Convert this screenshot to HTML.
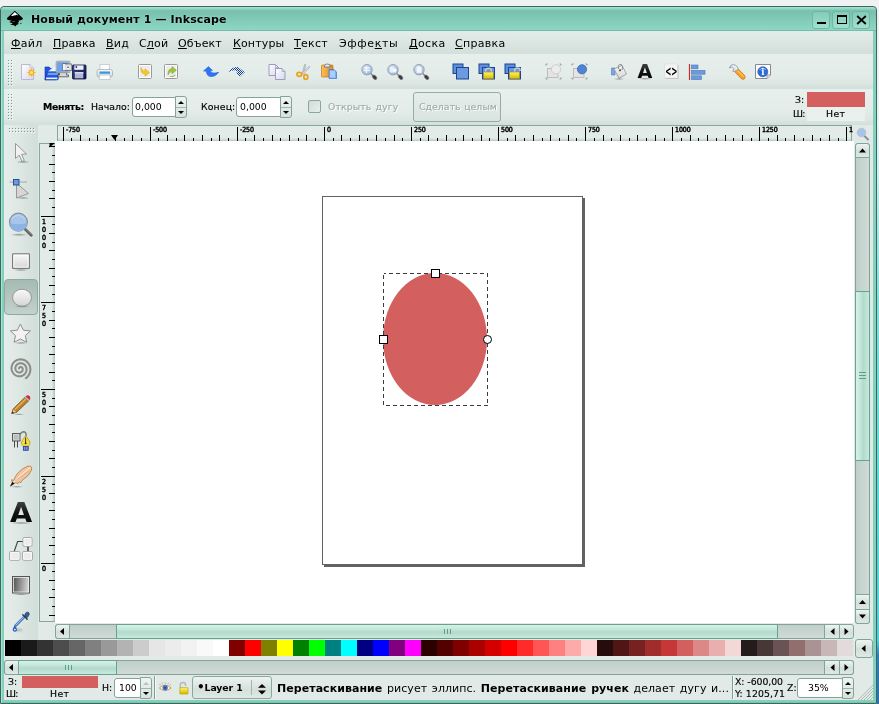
<!DOCTYPE html><html><head><meta charset="utf-8"><title>Inkscape</title><style>
html,body{margin:0;padding:0}
body{width:879px;height:704px;overflow:hidden;background:#eff1f2;position:relative;font-family:"DejaVu Sans","Liberation Sans",sans-serif;font-size:11px;color:#000}
div{position:absolute;box-sizing:border-box}
svg{position:absolute;overflow:visible}
span{position:absolute;white-space:nowrap;line-height:1;will-change:transform}
#win{left:0;top:6px;width:877px;height:698px;background:#84d0bd;border-radius:4px 4px 0 0;border:1px solid #3f665b;box-shadow:inset 1px 0 0 #a2e6d5,inset 0 -1px 0 #78c2af}
#title{left:1px;top:7px;width:875px;height:24px;background:linear-gradient(#a2e5d3 0,#9adfcc 4%,#7bc3b0 14%,#7ac2af 25%,#8bd7c4 94%,#74bba8 97%,#74bba8 100%);border-radius:4px 4px 0 0}
#content{left:4px;top:31px;width:869px;height:669px;background:#e1eae7}
#menubar{left:4px;top:31px;width:869px;height:23px;background:linear-gradient(#e3ece8,#d3dfda)}
#tb1{left:4px;top:54px;width:869px;height:35px;background:linear-gradient(#e7efec 0,#e3ece8 60%,#dde7e3 82%,#d2ded9 100%)}
#tb2{left:4px;top:89px;width:869px;height:36px;background:linear-gradient(#e8f0ed 0,#e3ece8 60%,#dde7e3 82%,#d3dfda 100%)}
.menu span{top:38px;font-size:11px}
.s9{font-size:9.33px;-webkit-text-stroke:0.15px currentColor}
u{text-decoration:underline;text-decoration-skip-ink:none;text-underline-offset:1px}
.hdl{background-image:radial-gradient(circle at 1px 1px,#fff 0.7px,transparent 1px),radial-gradient(circle at 0.5px 0.5px,#a9bab3 0.7px,transparent 1px);background-size:3px 3px}
.sbtn{border:1px solid #7fa597;border-radius:3px;background:linear-gradient(#eef4f1,#d3dfda 55%,#dfe8e4)}
.trough{border:1px solid #86a297;background:linear-gradient(#c0cfc9,#cfdbd6)}
.troughv{border:1px solid #86a297;background:linear-gradient(90deg,#c0cfc9,#cfdbd6)}
.slider{border:1px solid #62a68f;background:linear-gradient(#d9f0e8 0,#c4e6da 35%,#b0dbcb 55%,#c9e9dd 100%)}
.sliderv{border:1px solid #62a68f;background:linear-gradient(90deg,#d9f0e8 0,#c4e6da 35%,#b0dbcb 55%,#c9e9dd 100%)}
.entry{border:1px solid #86a397;border-radius:3px;background:#fff}
.dis{color:#9fada8;text-shadow:1px 1px 0 #fff}
</style></head><body>
<div id="win"></div><div id="title"></div><div id="content"></div>
<div style="left:877px;top:0;width:2px;height:704px;background:linear-gradient(#eff1f2 0,#eef0f2 80px,#e0f5f7 130px,#7fe0dc 300px,#55dcd8 500px,#4fd0d8 640px,#2f80b8 655px,#2a70b0 704px)"></div>
<span style="left:31px;top:14px;font-weight:bold;font-size:11px;letter-spacing:0.14px;text-shadow:0 0 2px rgba(190,245,230,0.7)">Новый документ 1 — Inkscape</span>
<svg style="left:0;top:0" width="40" height="40" viewBox="0 0 40 40"><path d="M14.800 10.800L22.700 18Q23.500 19.600 21.500 19.900L18.300 20.700L19.400 22L17.500 22.700L18.900 23.900L16.800 24.800L15.300 26.600L14 25.300L10.200 24.700L12.800 23.600L9.200 22L11.800 20.800L8.200 19.900Q6.300 19.600 7.100 18Z" fill="#000"/><path d="M14.800 12.100L18.300 15.200Q17 15.500 16.300 14.800Q15.300 15.800 14.300 15.200Q13 16.300 11.100 15.700Z" fill="#fff"/><path d="M12.400 21.500H14.800" stroke="#888" stroke-width="0.6"/><circle cx="20.900" cy="23.300" r="0.600" fill="#111"/></svg>
<div style="left:812px;top:10.5px;width:18px;height:18px;border:1px solid #6fb7a4;border-radius:3px;background:linear-gradient(#84cbb8,#a0e0ce)"></div>
<div style="left:832px;top:10.5px;width:18px;height:18px;border:1px solid #6fb7a4;border-radius:3px;background:linear-gradient(#84cbb8,#a0e0ce)"></div>
<div style="left:852px;top:10.5px;width:18px;height:18px;border:1px solid #6fb7a4;border-radius:3px;background:linear-gradient(#84cbb8,#a0e0ce)"></div>
<div style="left:817px;top:21.5px;width:9px;height:2.5px;background:#000"></div>
<div style="left:837px;top:15px;width:10px;height:9px;border:1px solid #000;border-top:2px solid #000"></div>
<svg style="left:856px;top:14.500px" width="11" height="10" viewBox="0 0 11 10"><path d="M1.2 1 L9.8 9 M9.8 1 L1.2 9" stroke="#000" stroke-width="1.8" fill="none"/></svg>
<div id="menubar"></div><div id="tb1"></div><div id="tb2"></div>
<div class="menu" style="left:0;top:0">
<span style="left:11px;letter-spacing:0.3px"><u>Ф</u>айл</span>
<span style="left:53px;letter-spacing:0.1px"><u>П</u>равка</span>
<span style="left:106px;letter-spacing:0.25px"><u>В</u>ид</span>
<span style="left:139px;letter-spacing:0.15px">С<u>л</u>ой</span>
<span style="left:178px;letter-spacing:0.14px"><u>О</u>бъект</span>
<span style="left:233px;letter-spacing:0.16px"><u>К</u>онтуры</span>
<span style="left:294px;letter-spacing:0.28px"><u>Т</u>екст</span>
<span style="left:338.5px;letter-spacing:0.6px">Эффе<u>к</u>ты</span>
<span style="left:408.5px;letter-spacing:0.39px"><u>Д</u>оска</span>
<span style="left:455px;letter-spacing:0.29px"><u>С</u>правка</span>
</div>
<!--TB1-->

<span class="s9" style="left:43px;top:102px;font-weight:bold;letter-spacing:-0.3px">Менять:</span>
<span class="s9" style="left:91px;top:102px">Начало:</span>
<span class="s9" style="left:201px;top:102px;letter-spacing:0.12px">Конец:</span>
<div class="entry" style="left:132px;top:97px;width:45px;height:20px"></div>
<div style="left:175px;top:96px;width:12px;height:22px;border:1px solid #86a397;border-radius:0 3px 3px 0;background:linear-gradient(#eef4f1,#d7e2dd)"></div>
<div style="left:176px;top:107px;width:10px;height:1px;background:#9db8ad"></div>
<svg style="left:178.0px;top:101px" width="6" height="3" viewBox="0 0 6 3"><path d="M0 3 L3 0 L6 3Z" fill="#000"/></svg>
<svg style="left:178.0px;top:111px" width="6" height="3" viewBox="0 0 6 3"><path d="M0 0 L3 3 L6 0Z" fill="#000"/></svg>
<span style="left:135px;top:102px;font-size:9.33px">0,000</span>
<div class="entry" style="left:236px;top:97px;width:46px;height:20px"></div>
<div style="left:280px;top:96px;width:12px;height:22px;border:1px solid #86a397;border-radius:0 3px 3px 0;background:linear-gradient(#eef4f1,#d7e2dd)"></div>
<div style="left:281px;top:107px;width:10px;height:1px;background:#9db8ad"></div>
<svg style="left:283.0px;top:101px" width="6" height="3" viewBox="0 0 6 3"><path d="M0 3 L3 0 L6 3Z" fill="#000"/></svg>
<svg style="left:283.0px;top:111px" width="6" height="3" viewBox="0 0 6 3"><path d="M0 0 L3 3 L6 0Z" fill="#000"/></svg>
<span style="left:240px;top:102px;font-size:9.33px">0,000</span>
<div style="left:308px;top:100px;width:13px;height:13px;border:1px solid #8aa79d;border-radius:2px;background:linear-gradient(135deg,#d0dcd7,#e8efec)"></div>
<span class="s9 dis" style="left:327.5px;top:102px;letter-spacing:0.12px;word-spacing:1px">Открыть дугу</span>
<div style="left:413px;top:92px;width:88px;height:30px;border:1px solid #93ada3;border-radius:3px;background:linear-gradient(#e6eeeb,#d9e3df)"></div>
<span class="s9 dis" style="left:418.500px;top:102px;letter-spacing:0.05px;word-spacing:0.5px">Сделать целым</span>
<span class="s9" style="left:795px;top:95px">З:</span>
<div style="left:807px;top:92px;width:58px;height:15px;background:#d35f5f"></div>
<span class="s9" style="left:792.500px;top:109px;letter-spacing:-0.7px">Ш:</span>
<div style="left:807px;top:107px;width:58px;height:14px;background:#e9f0ed"></div>
<span class="s9" style="left:826px;top:109px;letter-spacing:0.4px">Нет</span>
<!--TOOLBOX-->
<div style="left:4px;top:125px;width:34px;height:515px;background:linear-gradient(90deg,#e6eeeb,#d2ded9)"></div>
<div style="left:4px;top:279px;width:34px;height:36px;border:1px solid #8eaaa0;border-radius:4px;background:linear-gradient(#a6bab2,#c2d2cc)"></div>
<!--CANVAS-->
<div style="left:57px;top:125px;width:795px;height:16px;background:#e3ebe8;border:1px solid #86a79b;border-bottom:none"></div>
<div style="left:39px;top:143px;width:16px;height:479px;background:#e3ebe8;border:1px solid #86a79b;border-right:none"></div>
<div style="left:52px;top:144px;width:3px;height:477px;background:linear-gradient(90deg,rgba(120,160,145,0),rgba(120,160,145,0.55))"></div>
<div style="left:58px;top:138px;width:793px;height:3px;background:linear-gradient(rgba(120,160,145,0),rgba(120,160,145,0.45))"></div>
<div style="left:55px;top:141px;width:799px;height:482px;background:#fff"></div>
<svg style="left:0;top:0" width="879" height="704"><path d="M63.5 127V141 M71.5 138V141 M80.5 135V141 M89.5 138V141 M97.5 135V141 M106.5 138V141 M115.5 135V141 M124.5 138V141 M132.5 135V141 M141.5 138V141 M150.5 127V141 M158.5 138V141 M167.5 135V141 M176.5 138V141 M184.5 135V141 M193.5 138V141 M202.5 135V141 M211.5 138V141 M219.5 135V141 M228.5 138V141 M237.5 127V141 M245.5 138V141 M254.5 135V141 M263.5 138V141 M272.5 135V141 M280.5 138V141 M289.5 135V141 M298.5 138V141 M306.5 135V141 M315.5 138V141 M324.5 127V141 M333.5 138V141 M341.5 135V141 M350.5 138V141 M359.5 135V141 M367.5 138V141 M376.5 135V141 M385.5 138V141 M394.5 135V141 M402.5 138V141 M411.5 127V141 M420.5 138V141 M428.5 135V141 M437.5 138V141 M446.5 135V141 M455.5 138V141 M463.5 135V141 M472.5 138V141 M481.5 135V141 M489.5 138V141 M498.5 127V141 M507.5 138V141 M515.5 135V141 M524.5 138V141 M533.5 135V141 M542.5 138V141 M550.5 135V141 M559.5 138V141 M568.5 135V141 M576.5 138V141 M585.5 127V141 M594.5 138V141 M603.5 135V141 M611.5 138V141 M620.5 135V141 M629.5 138V141 M637.5 135V141 M646.5 138V141 M655.5 135V141 M664.5 138V141 M672.5 127V141 M681.5 138V141 M690.5 135V141 M698.5 138V141 M707.5 135V141 M716.5 138V141 M725.5 135V141 M733.5 138V141 M742.5 135V141 M751.5 138V141 M759.5 127V141 M768.5 138V141 M777.5 135V141 M785.5 138V141 M794.5 135V141 M803.5 138V141 M812.5 135V141 M820.5 138V141 M829.5 135V141 M838.5 138V141 M846.5 127V141" stroke="#000" stroke-width="1" fill="none" shape-rendering="crispEdges"/>
<path d="M49 615.5H55 M52 606.5H55 M49 597.5H55 M52 589.5H55 M49 580.5H55 M52 571.5H55 M41 563.5H55 M52 554.5H55 M49 545.5H55 M52 537.5H55 M49 528.5H55 M52 519.5H55 M49 510.5H55 M52 502.5H55 M49 493.5H55 M52 484.5H55 M41 476.5H55 M52 467.5H55 M49 458.5H55 M52 450.5H55 M49 441.5H55 M52 432.5H55 M49 424.5H55 M52 415.5H55 M49 406.5H55 M52 398.5H55 M41 389.5H55 M52 380.5H55 M49 372.5H55 M52 363.5H55 M49 354.5H55 M52 346.5H55 M49 337.5H55 M52 328.5H55 M49 320.5H55 M52 311.5H55 M41 302.5H55 M52 294.5H55 M49 285.5H55 M52 276.5H55 M49 268.5H55 M52 259.5H55 M49 250.5H55 M52 242.5H55 M49 233.5H55 M52 224.5H55 M41 216.5H55 M52 207.5H55 M49 198.5H55 M52 190.5H55 M49 181.5H55 M52 172.5H55 M49 164.5H55 M52 155.5H55 M49 146.5H55" stroke="#000" stroke-width="1" fill="none" shape-rendering="crispEdges"/>
<path d="M111 135h7l-3.5 5z" fill="#000"/><path d="M49.500 143h5.500L49.500 147.500z" fill="#000"/>
</svg>
<span style="left:66px;top:127px;font-size:7px;font-stretch:condensed;letter-spacing:-0.1px;-webkit-text-stroke:0.45px #000">-750</span>
<span style="left:153px;top:127px;font-size:7px;font-stretch:condensed;letter-spacing:-0.1px;-webkit-text-stroke:0.45px #000">-500</span>
<span style="left:240px;top:127px;font-size:7px;font-stretch:condensed;letter-spacing:-0.1px;-webkit-text-stroke:0.45px #000">-250</span>
<span style="left:327px;top:127px;font-size:7px;font-stretch:condensed;letter-spacing:-0.1px;-webkit-text-stroke:0.45px #000">0</span>
<span style="left:414px;top:127px;font-size:7px;font-stretch:condensed;letter-spacing:-0.1px;-webkit-text-stroke:0.45px #000">250</span>
<span style="left:501px;top:127px;font-size:7px;font-stretch:condensed;letter-spacing:-0.1px;-webkit-text-stroke:0.45px #000">500</span>
<span style="left:588px;top:127px;font-size:7px;font-stretch:condensed;letter-spacing:-0.1px;-webkit-text-stroke:0.45px #000">750</span>
<span style="left:675px;top:127px;font-size:7px;font-stretch:condensed;letter-spacing:-0.1px;-webkit-text-stroke:0.45px #000">1000</span>
<span style="left:762px;top:127px;font-size:7px;font-stretch:condensed;letter-spacing:-0.1px;-webkit-text-stroke:0.45px #000">1250</span>
<span style="left:849px;top:127px;font-size:7px;font-stretch:condensed;letter-spacing:-0.1px;-webkit-text-stroke:0.45px #000">1</span>
<span style="left:42px;top:219px;font-size:7px;font-stretch:condensed;-webkit-text-stroke:0.45px #000">1</span>
<span style="left:42px;top:227px;font-size:7px;font-stretch:condensed;-webkit-text-stroke:0.45px #000">0</span>
<span style="left:42px;top:235px;font-size:7px;font-stretch:condensed;-webkit-text-stroke:0.45px #000">0</span>
<span style="left:42px;top:243px;font-size:7px;font-stretch:condensed;-webkit-text-stroke:0.45px #000">0</span>
<span style="left:42px;top:305px;font-size:7px;font-stretch:condensed;-webkit-text-stroke:0.45px #000">7</span>
<span style="left:42px;top:313px;font-size:7px;font-stretch:condensed;-webkit-text-stroke:0.45px #000">5</span>
<span style="left:42px;top:321px;font-size:7px;font-stretch:condensed;-webkit-text-stroke:0.45px #000">0</span>
<span style="left:42px;top:392px;font-size:7px;font-stretch:condensed;-webkit-text-stroke:0.45px #000">5</span>
<span style="left:42px;top:400px;font-size:7px;font-stretch:condensed;-webkit-text-stroke:0.45px #000">0</span>
<span style="left:42px;top:408px;font-size:7px;font-stretch:condensed;-webkit-text-stroke:0.45px #000">0</span>
<span style="left:42px;top:479px;font-size:7px;font-stretch:condensed;-webkit-text-stroke:0.45px #000">2</span>
<span style="left:42px;top:487px;font-size:7px;font-stretch:condensed;-webkit-text-stroke:0.45px #000">5</span>
<span style="left:42px;top:495px;font-size:7px;font-stretch:condensed;-webkit-text-stroke:0.45px #000">0</span>
<span style="left:42px;top:566px;font-size:7px;font-stretch:condensed;-webkit-text-stroke:0.45px #000">0</span>
<div style="left:324px;top:198px;width:261px;height:369px;background:#626262"></div>
<div style="left:322px;top:196px;width:261px;height:369px;background:#fff;border:1px solid #626262"></div>
<svg style="left:0;top:0" width="879" height="704"><ellipse cx="435" cy="339" rx="52" ry="66" fill="#d35f5f"/><rect x="383.5" y="273.5" width="104" height="132" fill="none" stroke="#3c3c3c" stroke-width="1" stroke-dasharray="4 3" stroke-dashoffset="2" shape-rendering="crispEdges"/><rect x="431.500" y="269.500" width="8" height="8" fill="#fff" stroke="#000"/><rect x="379.500" y="335.500" width="8" height="8" fill="#fff" stroke="#000"/><circle cx="487.500" cy="339.500" r="4" fill="#fff" stroke="#000"/></svg>
<!--SCROLL-->
<div class="trough" style="left:55px;top:624px;width:798px;height:15px;border-radius:3px"></div>
<div class="slider" style="left:116px;top:624px;width:662px;height:15px"></div>
<div class="sbtn" style="left:55px;top:624px;width:15px;height:15px;border-radius:3px 0 0 3px"></div>
<svg style="left:0;top:0" width="879" height="704"><path d="M64 628.0L60 631.5L64 635.0Z" fill="#000"/></svg>
<div class="sbtn" style="left:824px;top:624px;width:16px;height:15px;border-radius:0"></div>
<svg style="left:0;top:0" width="879" height="704"><path d="M834.5 628.0L830.5 631.5L834.5 635.0Z" fill="#000"/></svg>
<div class="sbtn" style="left:839px;top:624px;width:15px;height:15px;border-radius:0 3px 3px 0"></div>
<svg style="left:0;top:0" width="879" height="704"><path d="M844.5 628.0L848.5 631.5L844.5 635.0Z" fill="#000"/></svg>
<svg style="left:444px;top:629px" width="8" height="5"><path d="M0.5 0V5M3.5 0V5M6.5 0V5" stroke="#5f9f8a" stroke-width="1"/></svg>
<div class="troughv" style="left:855px;top:143px;width:15px;height:481px;border-radius:3px"></div>
<div class="sliderv" style="left:855px;top:291px;width:15px;height:170px"></div>
<div class="sbtn" style="left:855px;top:143px;width:15px;height:15px;border-radius:3px 3px 0 0"></div>
<svg style="left:0;top:0" width="879" height="704"><path d="M859.0 152.5L862.5 148.5L866.0 152.5Z" fill="#000"/></svg>
<div class="sbtn" style="left:855px;top:594px;width:15px;height:16px;border-radius:0"></div>
<svg style="left:0;top:0" width="879" height="704"><path d="M859.0 604L862.5 600L866.0 604Z" fill="#000"/></svg>
<div class="sbtn" style="left:855px;top:609px;width:15px;height:15px;border-radius:0 0 3px 3px"></div>
<svg style="left:0;top:0" width="879" height="704"><path d="M859.0 614.5L862.5 618.5L866.0 614.5Z" fill="#000"/></svg>
<svg style="left:859px;top:372px" width="7" height="8"><path d="M0 0.5H7M0 3.5H7M0 6.5H7" stroke="#5f9f8a" stroke-width="1"/></svg>
<div style="left:5px;top:640px;width:848px;height:16px;background:linear-gradient(90deg,#000000 0px,#000000 16px,#1a1a1a 16px,#1a1a1a 32px,#333333 32px,#333333 48px,#4d4d4d 48px,#4d4d4d 64px,#666666 64px,#666666 80px,#808080 80px,#808080 96px,#999999 96px,#999999 112px,#b3b3b3 112px,#b3b3b3 128px,#cccccc 128px,#cccccc 144px,#e6e6e6 144px,#e6e6e6 160px,#ececec 160px,#ececec 176px,#f2f2f2 176px,#f2f2f2 192px,#f9f9f9 192px,#f9f9f9 208px,#ffffff 208px,#ffffff 224px,#800000 224px,#800000 240px,#ff0000 240px,#ff0000 256px,#808000 256px,#808000 272px,#ffff00 272px,#ffff00 288px,#008000 288px,#008000 304px,#00ff00 304px,#00ff00 320px,#008080 320px,#008080 336px,#00ffff 336px,#00ffff 352px,#000080 352px,#000080 368px,#0000ff 368px,#0000ff 384px,#800080 384px,#800080 400px,#ff00ff 400px,#ff00ff 416px,#2b0000 416px,#2b0000 432px,#550000 432px,#550000 448px,#800000 448px,#800000 464px,#aa0000 464px,#aa0000 480px,#d40000 480px,#d40000 496px,#ff0000 496px,#ff0000 512px,#ff2a2a 512px,#ff2a2a 528px,#ff5555 528px,#ff5555 544px,#ff8080 544px,#ff8080 560px,#ffaaaa 560px,#ffaaaa 576px,#ffd5d5 576px,#ffd5d5 592px,#280b0b 592px,#280b0b 608px,#501616 608px,#501616 624px,#782121 624px,#782121 640px,#a02c2c 640px,#a02c2c 656px,#c83737 656px,#c83737 672px,#d35f5f 672px,#d35f5f 688px,#de8787 688px,#de8787 704px,#e9afaf 704px,#e9afaf 720px,#f4d7d7 720px,#f4d7d7 736px,#241c1c 736px,#241c1c 752px,#483737 752px,#483737 768px,#6c5353 768px,#6c5353 784px,#916f6f 784px,#916f6f 800px,#ac9393 800px,#ac9393 816px,#c8b7b7 816px,#c8b7b7 832px,#e3dbdb 832px,#e3dbdb 848px)"></div>
<div class="sbtn" style="left:855px;top:639px;width:18px;height:19px"></div>
<svg style="left:0;top:0" width="879" height="704"><path d="M865.5 645.0L861.5 648.5L865.5 652.0Z" fill="#000"/></svg>
<div class="trough" style="left:4px;top:660px;width:850px;height:15px;border-radius:3px"></div>
<div class="slider" style="left:18px;top:660px;width:99px;height:15px"></div>
<div class="sbtn" style="left:4px;top:660px;width:15px;height:15px;border-radius:3px 0 0 3px"></div>
<svg style="left:0;top:0" width="879" height="704"><path d="M13 664.0L9 667.5L13 671.0Z" fill="#000"/></svg>
<div class="sbtn" style="left:824px;top:660px;width:16px;height:15px;border-radius:0"></div>
<svg style="left:0;top:0" width="879" height="704"><path d="M834.5 664.0L830.5 667.5L834.5 671.0Z" fill="#000"/></svg>
<div class="sbtn" style="left:839px;top:660px;width:15px;height:15px;border-radius:0 3px 3px 0"></div>
<svg style="left:0;top:0" width="879" height="704"><path d="M844.5 664.0L848.5 667.5L844.5 671.0Z" fill="#000"/></svg>
<svg style="left:65px;top:665px" width="8" height="5"><path d="M0.5 0V5M3.5 0V5M6.5 0V5" stroke="#5f9f8a" stroke-width="1"/></svg>
<!--STATUS-->
<span class="s9" style="left:8px;top:677px">З:</span>
<div style="left:22px;top:676px;width:76px;height:12px;background:#d35f5f"></div>
<span class="s9" style="left:5.800px;top:689px;letter-spacing:-0.7px">Ш:</span>
<span class="s9" style="left:50px;top:689px;letter-spacing:0.4px">Нет</span>
<span class="s9" style="left:102px;top:683px">Н:</span>
<div class="entry" style="left:114px;top:678px;width:28px;height:20px"></div>
<div style="left:140px;top:677px;width:12px;height:22px;border:1px solid #86a397;border-radius:0 3px 3px 0;background:linear-gradient(#eef4f1,#d7e2dd)"></div>
<div style="left:141px;top:688px;width:10px;height:1px;background:#9db8ad"></div>
<svg style="left:143.0px;top:682px" width="6" height="3" viewBox="0 0 6 3"><path d="M0 3 L3 0 L6 3Z" fill="#b5c2bd"/></svg>
<svg style="left:143.0px;top:692px" width="6" height="3" viewBox="0 0 6 3"><path d="M0 0 L3 3 L6 0Z" fill="#000"/></svg>
<span style="left:119px;top:683px;font-size:9.33px">100</span>
<div style="left:154px;top:676px;width:1px;height:23px;background:#7f9f93"></div><div style="left:155px;top:676px;width:1px;height:23px;background:#f4f8f6"></div>
<div style="left:192px;top:676px;width:80px;height:23px;border:1px solid #8aa99e;border-radius:3px;background:linear-gradient(#edf3f0,#d5e0db 60%,#dfe8e4)"></div>
<span style="left:197px;top:683px;font-size:9.33px;font-weight:bold;letter-spacing:-0.1px"><span style="position:static;font-size:12px;line-height:0">•</span>Layer 1</span>
<div style="left:251px;top:680px;width:1px;height:15px;background:#9db8ad"></div>
<svg style="left:257.5px;top:683.5px" width="8" height="11" viewBox="0 0 8 11"><path d="M0 3.8L4 0L8 3.800ZM0 6.4L4 10.4L8 6.400Z" fill="#000"/></svg>
<span style="left:277px;top:683px;font-size:11px;letter-spacing:0.05px;word-spacing:1.1px"><b>Перетаскивание</b> рисует эллипс. <b>Перетаскивание ручек</b> делает дугу и...</span>
<div style="left:732px;top:676px;width:1px;height:23px;background:#7f9f93"></div><div style="left:733px;top:676px;width:1px;height:23px;background:#f4f8f6"></div>
<span class="s9" style="left:735px;top:677px;letter-spacing:-0.05px">X: -600,00</span>
<span class="s9" style="left:735px;top:689px;letter-spacing:0.1px">Y: 1205,71</span>
<span class="s9" style="left:787px;top:683px">Z:</span>
<div class="entry" style="left:797px;top:678px;width:47px;height:20px"></div>
<div style="left:842px;top:677px;width:12px;height:22px;border:1px solid #86a397;border-radius:0 3px 3px 0;background:linear-gradient(#eef4f1,#d7e2dd)"></div>
<div style="left:843px;top:688px;width:10px;height:1px;background:#9db8ad"></div>
<svg style="left:845.0px;top:682px" width="6" height="3" viewBox="0 0 6 3"><path d="M0 3 L3 0 L6 3Z" fill="#000"/></svg>
<svg style="left:845.0px;top:692px" width="6" height="3" viewBox="0 0 6 3"><path d="M0 0 L3 3 L6 0Z" fill="#000"/></svg>
<span style="left:807.5px;top:683px;font-size:9.33px">35%</span>
<svg style="left:857px;top:684px" width="16" height="16"><path d="M1 16L16 1M4 16L16 4M7 16L16 7M10 16L16 10M13 16L16 13" stroke="#a9bcb4" stroke-width="1"/></svg>
<svg style="left:0;top:0" width="879" height="704" viewBox="0 0 879 704">
<defs><linearGradient id="gpage" x1="0" y1="0" x2="1" y2="1"><stop offset="0" stop-color="#fff"/><stop offset="1" stop-color="#d6d6ee"/></linearGradient><linearGradient id="gblue" x1="0" y1="0" x2="0" y2="1"><stop offset="0" stop-color="#3f7cf0"/><stop offset="1" stop-color="#0f35b8"/></linearGradient><linearGradient id="gnavy" x1="0" y1="0" x2="1" y2="1"><stop offset="0" stop-color="#3b4a8c"/><stop offset="1" stop-color="#0c1446"/></linearGradient><linearGradient id="ggray" x1="0" y1="0" x2="0" y2="1"><stop offset="0" stop-color="#fafafa"/><stop offset="1" stop-color="#d4d4d4"/></linearGradient><linearGradient id="gor" x1="0" y1="0" x2="1" y2="0"><stop offset="0" stop-color="#f8c060"/><stop offset="1" stop-color="#e08a18"/></linearGradient><radialGradient id="glens" cx="0.4" cy="0.35" r="0.7"><stop offset="0" stop-color="#dce9fa"/><stop offset="1" stop-color="#8fb4e6"/></radialGradient><linearGradient id="gyel" x1="0" y1="0" x2="0" y2="1"><stop offset="0" stop-color="#fff46a"/><stop offset="1" stop-color="#d8b800"/></linearGradient><linearGradient id="gA" x1="0" y1="0" x2="0" y2="1"><stop offset="0" stop-color="#555"/><stop offset="0.5" stop-color="#111"/><stop offset="1" stop-color="#000"/></linearGradient><linearGradient id="ggrad" x1="0" y1="0" x2="1" y2="0.100"><stop offset="0" stop-color="#4a4a4a"/><stop offset="1" stop-color="#d8d8d8"/></linearGradient><radialGradient id="gshadow" cx="0.5" cy="0.5" r="0.5"><stop offset="0" stop-color="#000" stop-opacity="0.35"/><stop offset="1" stop-color="#000" stop-opacity="0"/></radialGradient><pattern id="pchk" x="0" y="0" width="2" height="2" patternUnits="userSpaceOnUse"><rect x="0" y="0" width="1" height="1" fill="#1c3c9c"/><rect x="1" y="1" width="1" height="1" fill="#1c3c9c"/></pattern><pattern id="pdots" x="8" y="60" width="3" height="3" patternUnits="userSpaceOnUse"><rect x="0" y="0" width="1" height="1" fill="#7f9a90"/><rect x="1" y="1" width="1" height="1" fill="#fff"/></pattern><pattern id="pdots2" x="8" y="94" width="3" height="3" patternUnits="userSpaceOnUse"><rect x="0" y="0" width="1" height="1" fill="#7f9a90"/><rect x="1" y="1" width="1" height="1" fill="#fff"/></pattern><pattern id="pdots3" x="9" y="128" width="3" height="3" patternUnits="userSpaceOnUse"><rect x="0" y="0" width="1" height="1" fill="#7f9a90"/><rect x="1" y="1" width="1" height="1" fill="#fff"/></pattern></defs>
<rect x="8" y="60" width="6" height="27" fill="url(#pdots)"/><rect x="8" y="94" width="6" height="27" fill="url(#pdots2)"/><rect x="9" y="128" width="27" height="6" fill="url(#pdots3)"/>
<path d="M21.5 64.5H30l3.5 3.5V79.5H21.5Z" fill="url(#gpage)" stroke="#b9b9cf" stroke-width="1"/>
<path d="M30 64.5V68H33.5" fill="#e8e8f4" stroke="#b9b9cf" stroke-width="0.8"/>
<path d="M31.5 68l1 2.2 2.2-.9-.9 2.2 2.2 1-2.2 1 .9 2.2-2.2-.9-1 2.2-1-2.2-2.2.9.9-2.2-2.2-1 2.2-1-.9-2.2 2.2.9Z" fill="#f6b21c"/><circle cx="31.5" cy="72.5" r="1.6" fill="#ffe27a"/>
<path d="M45 79.8V67H49.2L50.5 68.5H56V79.800Z" fill="#1f55dd" stroke="#0b2fb0" stroke-width="0.600"/>
<path d="M48.2 71.500L56.200 64.800V71.500Z" fill="#eef3ff" stroke="#b8c8ee" stroke-width="0.400"/>
<path d="M47.300 72H59.300L58 79.800H45Z" fill="url(#gblue)" stroke="#0b2fb0" stroke-width="0.600"/>
<path d="M48 73.200H58L57.700 74.800H47.500Z" fill="#8fc4ff" opacity="0.800"/><path d="M46.200 77.500H57.600L57.300 79.200H45.800Z" fill="#f2f6ff" opacity="0.950"/>
<path d="M59.500 72.500H66.600V75H68.500V76.800H58V75H59.500Z" fill="#d6d8dc" stroke="#3a3a3a" stroke-width="0.700"/>
<rect x="56.200" y="61.200" width="13.800" height="11.500" rx="1" fill="#cfc8bc" stroke="#8e8a84" stroke-width="0.700"/><rect x="57.400" y="62.500" width="11" height="9" fill="#4f8fe6"/><rect x="57.400" y="62.500" width="4.500" height="9" fill="#6aa4f0"/>
<rect x="62.800" y="64" width="9" height="6.300" fill="#dcdde4" stroke="#3a3a4a" stroke-width="0.500"/><rect x="62.800" y="64" width="2.200" height="6.300" fill="#f4f0e8"/><circle cx="68" cy="67.200" r="1.500" fill="#fff"/><circle cx="68" cy="67.200" r="0.800" fill="#22224a"/>
<rect x="72.5" y="65" width="13.5" height="14" rx="0.8" fill="url(#gnavy)" stroke="#0a1040" stroke-width="0.8"/>
<rect x="74.300" y="65.400" width="9.200" height="4.400" fill="#eef0f8"/><circle cx="76.300" cy="67" r="0.900" fill="#27337a"/>
<rect x="74.800" y="72" width="8.500" height="6.300" fill="#b4b6d6"/><rect x="74.800" y="72" width="8.500" height="1.500" fill="#d8daf0"/>
<rect x="100" y="64.5" width="9.5" height="6.5" fill="#fdfdfd" stroke="#c2c6cc" stroke-width="0.8"/>
<rect x="97" y="69.5" width="15.5" height="7.5" rx="2" fill="url(#ggray)" stroke="#a9adb3" stroke-width="0.8"/>
<rect x="99.5" y="71.5" width="10.5" height="2.2" fill="#2f96e8"/>
<rect x="99.5" y="75" width="10.5" height="4.5" fill="#fff" stroke="#bfc3c9" stroke-width="0.8"/>
<rect x="138.5" y="64.5" width="13" height="14" rx="1" fill="#ececec" stroke="#9a9a9a" stroke-width="1"/><rect x="139.5" y="65.5" width="11" height="12" fill="none" stroke="#fff" stroke-width="0.8"/>
<rect x="164.5" y="64.5" width="13" height="14" rx="1" fill="#ececec" stroke="#9a9a9a" stroke-width="1"/><rect x="165.5" y="65.5" width="11" height="12" fill="none" stroke="#fff" stroke-width="0.8"/>
<path d="M141 67.5Q141.5 71 145 71V68.8L149.5 72.5L145 76.2V74Q140 73.5 141 67.5Z" fill="#f2cc2c" stroke="#d6a400" stroke-width="0.5"/>
<path d="M168 75Q167.5 69 172 68.6V66.4L176.3 70.2L172 73.8V71.6Q169 71.8 168 75ZM170 76.5Q173 77.5 175.5 75" fill="#9cc43c" stroke="#7aa424" stroke-width="0.5"/>
<path d="M203.5 71L208.5 66.5L212.5 70.5L210.3 70.8Q211 74.3 218.8 72.3Q215 77.3 210.5 76.6Q206.5 76 206.3 71.2Z" fill="#2f74f2" stroke="#1f5ad8" stroke-width="0.5"/>
<path d="M229 71Q233 66.5 238.5 67.2L244.8 72.2L239.8 76.8L236.2 72.8L238 72Q235 68.5 229 71.8Z" fill="url(#pchk)"/>
<path d="M269 64.5H275.5L278.5 67.5V75.5H269Z" fill="url(#gpage)" stroke="#9c9cbe" stroke-width="1"/><path d="M275.5 64.5V67.5H278.5" fill="none" stroke="#9c9cbe" stroke-width="0.7"/>
<path d="M275.5 68.5H282.0L285.0 71.5V79.5H275.5Z" fill="url(#gpage)" stroke="#9c9cbe" stroke-width="1"/><path d="M282.0 68.5V71.5H285.0" fill="none" stroke="#9c9cbe" stroke-width="0.7"/>
<path d="M304.5 64.5L305.8 64.5L304 74L302.2 73Z" fill="#c4c8d0" stroke="#8e929a" stroke-width="0.4"/><path d="M309.3 66L310 67L303 74.5L301.6 73.2Z" fill="#d4d8e0" stroke="#8e929a" stroke-width="0.4"/>
<ellipse cx="299.3" cy="74.3" rx="2.4" ry="2" fill="none" stroke="#eea21a" stroke-width="1.7"/><ellipse cx="305.8" cy="77" rx="2" ry="2.4" fill="none" stroke="#eea21a" stroke-width="1.7"/>
<rect x="321.5" y="65" width="11.5" height="12" rx="1" fill="url(#gor)" stroke="#c47a10" stroke-width="0.7"/><path d="M324.5 65.8Q324.5 64 327.2 64Q330 64 330 65.8V67H324.5Z" fill="#e6eaf0" stroke="#50608a" stroke-width="0.7"/>
<path d="M329 69.5H334L336.5 72V78.5H329Z" fill="#7fb0f6" stroke="#3c74d8" stroke-width="0.7"/><path d="M330 71H335V77.5H330Z" fill="#b9d5fb" opacity="0.8"/>
<path d="M370.5 73.2L373.5 76.200" stroke="#8a8a8a" stroke-width="1.600"/><ellipse cx="374.6" cy="77.300" rx="2.700" ry="1.700" transform="rotate(45 374.6 77.300)" fill="#3c3c3c" stroke="#777" stroke-width="0.500"/>
<circle cx="367" cy="69.7" r="5.2" fill="url(#glens)" stroke="#9aa0a8" stroke-width="1"/>
<path d="M364 68H370M364 70.5H370M366.5 66.5V73" stroke="#fff" stroke-width="1" opacity="0.85"/>
<path d="M396.5 73.2L399.5 76.200" stroke="#8a8a8a" stroke-width="1.600"/><ellipse cx="400.6" cy="77.300" rx="2.700" ry="1.700" transform="rotate(45 400.6 77.300)" fill="#3c3c3c" stroke="#777" stroke-width="0.500"/>
<circle cx="393" cy="69.7" r="5.2" fill="url(#glens)" stroke="#9aa0a8" stroke-width="1"/>
<path d="M389.8 67H394V69.5H396V72.5H389.8Z" fill="#eef3fb" opacity="0.9"/><circle cx="395" cy="70" r="1.6" fill="#fff"/>
<path d="M422.5 73.2L425.5 76.200" stroke="#8a8a8a" stroke-width="1.600"/><ellipse cx="426.6" cy="77.300" rx="2.700" ry="1.700" transform="rotate(45 426.6 77.300)" fill="#3c3c3c" stroke="#777" stroke-width="0.500"/>
<circle cx="419" cy="69.7" r="5.2" fill="url(#glens)" stroke="#9aa0a8" stroke-width="1"/>
<path d="M416.5 66.3H420.2L421.7 67.8V73H416.5Z" fill="#f4f6fb" stroke="#c9d3e6" stroke-width="0.4"/>
<rect x="453" y="64" width="10" height="9.5" fill="#5f8fd8" stroke="#1c4496" stroke-width="1"/>
<rect x="456.5" y="67.5" width="12" height="11.5" fill="#6c9ade" stroke="#1c4496" stroke-width="1"/>
<rect x="479" y="64" width="10" height="9.5" fill="#5f8fd8" stroke="#1c4496" stroke-width="1"/>
<rect x="482.5" y="67.5" width="12" height="11.5" fill="#6c9ade" stroke="#1c4496" stroke-width="1"/>
<path d="M485.7 72.5V70.3Q485.7 68.2 488.5 68.2Q491.3 68.2 491.3 70.3V72.5" fill="none" stroke="#c8ccd2" stroke-width="1.4"/>
<rect x="483.5" y="72" width="10" height="6.8" rx="0.6" fill="url(#gyel)" stroke="#9a8200" stroke-width="0.6"/>
<rect x="505" y="64" width="10" height="9.5" fill="#5f8fd8" stroke="#1c4496" stroke-width="1"/>
<rect x="508.5" y="67.5" width="12" height="11.5" fill="#6c9ade" stroke="#1c4496" stroke-width="1"/>
<path d="M514.7 72.5V70Q514.7 68 517.5 68Q520.1 68 520.1 70V71" fill="none" stroke="#c8ccd2" stroke-width="1.4"/>
<rect x="509.5" y="72" width="10" height="6.8" rx="0.6" fill="url(#gyel)" stroke="#9a8200" stroke-width="0.6"/>
<rect x="547.5" y="68.5" width="10.5" height="9" fill="#e4e4e4" stroke="#b8b8b8" stroke-width="0.9"/>
<circle cx="556" cy="69.3" r="4.6" fill="#ececec" stroke="#c4c4c4" stroke-width="0.8"/>
<path d="M546 65.5V64H547.5M559.5 64H561V65.5M546 77.5V79H547.5M559.5 79H561V77.5" fill="none" stroke="#777" stroke-width="0.7"/>
<rect x="573.5" y="68.5" width="10.5" height="9" fill="#e4e4e4" stroke="#b8b8b8" stroke-width="0.9"/>
<circle cx="582" cy="69.3" r="4.6" fill="#4f84d0" stroke="#3a6ab8" stroke-width="0.8"/>
<path d="M572 65.5V64H573.5M585.5 64H587V65.5M572 77.5V79H573.5M585.5 79H587V77.5" fill="none" stroke="#777" stroke-width="0.7"/>
<path d="M611.5 68H615V75H611.5Z" fill="#7ea6e0" stroke="#4a78c0" stroke-width="0.6"/>
<path d="M614 69L622 65.5L626.5 74L619 78.5Z" fill="url(#ggray)" stroke="#8e9298" stroke-width="0.8"/><path d="M618.5 69Q617.5 63.5 621.5 64.5Q623.5 65.5 622 70" fill="none" stroke="#8a8e94" stroke-width="1"/><circle cx="620" cy="70.3" r="1.1" fill="#555"/>
<ellipse cx="619" cy="79" rx="6" ry="1" fill="url(#gshadow)"/>
<ellipse cx="645" cy="78.7" rx="8" ry="1.3" fill="url(#gshadow)"/>
<text x="645" y="78.300" text-anchor="middle" font-family="DejaVu Sans, Liberation Sans, sans-serif" font-weight="bold" font-size="19.200" fill="url(#gA)">A</text>
<rect x="665.500" y="65" width="13" height="14" fill="#b9bfbc"/><rect x="664.500" y="64" width="13" height="14" fill="#f4f4f4" stroke="#dadada" stroke-width="0.600"/><text transform="translate(671.200 76) scale(0.780 1.500)" x="0" y="0" text-anchor="middle" letter-spacing="-0.300" font-family="DejaVu Sans, Liberation Sans, sans-serif" font-weight="bold" font-size="9.500" fill="#000">&lt;&gt;</text>
<path d="M689.500 64V80" stroke="#d42a2a" stroke-width="1.200"/>
<rect x="691.5" y="65" width="6.5" height="3.800" fill="#6d9ad8" stroke="#4878c0" stroke-width="0.6"/><rect x="691.5" y="70.400" width="13.5" height="3.800" fill="#6d9ad8" stroke="#4878c0" stroke-width="0.6"/><rect x="691.5" y="75.800" width="10" height="3.800" fill="#6d9ad8" stroke="#4878c0" stroke-width="0.6"/>
<path d="M737 71L743 77" stroke="#c87810" stroke-width="5" stroke-linecap="round"/><path d="M737 71L743 77" stroke="#f6a422" stroke-width="3.800" stroke-linecap="round"/><path d="M737.6 70.6L743.2 76.2" stroke="#ffc866" stroke-width="1.1" stroke-linecap="round"/>
<path d="M733.5 64.5Q730 64.5 729.3 68L732 66.8L734 68.8L732.8 71.5Q736.5 71 737.8 69.8Q738.8 66 733.5 64.5Z" fill="#e8ecf0" stroke="#8e96a0" stroke-width="0.8"/>
<path d="M755.5 64.5H770.5V75L767 78.5H755.5Z" fill="#fbfbfb" stroke="#7a7e86" stroke-width="0.9"/><path d="M770.5 75H767V78.5" fill="#e4e4e4" stroke="#7a7e86" stroke-width="0.7"/>
<circle cx="762.8" cy="71.8" r="5" fill="#2c6cd6" stroke="#1a4aa8" stroke-width="0.6"/><path d="M759.5 69.5Q762.8 66.5 766 69.5" fill="none" stroke="#9cc0f4" stroke-width="1"/><text x="762.850" y="74.800" text-anchor="middle" font-family="DejaVu Serif, Liberation Serif, serif" font-weight="bold" font-size="8.500" fill="#fff">i</text>
<path d="M864.5 136L868 139.5" stroke="#8a8e96" stroke-width="2" stroke-linecap="round"/><circle cx="861.5" cy="132.5" r="4.3" fill="#a8c4ea" stroke="#b8c0cc" stroke-width="0.9"/>
<ellipse cx="23" cy="162" rx="7" ry="1.5" fill="url(#gshadow)"/>
<path d="M15.5 143.5V158.5L19.3 155.2L22 161.5L24.3 160.5L21.6 154.3L26.5 154Z" fill="#f1f1f1" stroke="#8e8e8e" stroke-width="0.9"/>
<ellipse cx="23" cy="198" rx="7" ry="1.3" fill="url(#gshadow)"/>
<path d="M9.5 182H27" stroke="#9a9a9a" stroke-width="0.8"/>
<path d="M16.5 183V198L28.5 193.5Z" fill="#d6d6d6" stroke="#8e8e8e" stroke-width="0.9"/>
<rect x="13.5" y="179.5" width="5.5" height="5.5" fill="#6d9ad8" stroke="#1c4496" stroke-width="0.9"/>
<ellipse cx="19" cy="234.700" rx="9" ry="1.500" fill="url(#gshadow)"/>
<path d="M25 229L31.300 235.300" stroke="#5c5c5c" stroke-width="2.800" stroke-linecap="round"/><path d="M25.300 228.700L31.300 234.700" stroke="#9a9a9a" stroke-width="0.800" stroke-linecap="round"/>
<circle cx="18.400" cy="222.100" r="8.900" fill="#a6c5ec" stroke="#888c92" stroke-width="1.200"/><path d="M9.900 223.200Q18.400 225.200 26.900 223.200A8.500 8.500 0 0 1 9.900 223.200Z" fill="#8db3e2"/><path d="M11.500 219Q18 212 25.300 219" fill="none" stroke="#c4daf4" stroke-width="1.200" opacity="0.800"/>
<ellipse cx="21" cy="270" rx="8" ry="1.200" fill="url(#gshadow)"/>
<rect x="12.600" y="253.800" width="16.800" height="14.600" rx="0.500" fill="url(#ggray)" stroke="#7c7c7c" stroke-width="1.200"/><rect x="13.900" y="255.100" width="14.200" height="12" fill="none" stroke="#fcfcfc" stroke-width="0.900"/>
<ellipse cx="22" cy="306.5" rx="8" ry="1.2" fill="url(#gshadow)"/>
<ellipse cx="22" cy="297.7" rx="9.5" ry="8.5" fill="url(#ggray)" stroke="#928e8a" stroke-width="0.9"/>
<ellipse cx="21" cy="343" rx="7" ry="1.2" fill="url(#gshadow)"/>
<path d="M20.400 324L23.400 330.200L30.400 330.900L25.300 335.600L26.700 342.300L20.400 339L14.100 342.300L15.500 335.600L10.400 330.900L17.400 330.200Z" fill="#f3f3f3" stroke="#8e8e8e" stroke-width="1" stroke-linejoin="round"/>
<path d="M25.83 378.13L26.71 377.44L27.51 376.66L28.23 375.81L28.85 374.90L29.37 373.94L29.79 372.93L30.10 371.90L30.30 370.84L30.39 369.77L30.37 368.71L30.25 367.66L30.02 366.63L29.69 365.64L29.26 364.70L28.74 363.81L28.13 362.98L27.45 362.22L26.70 361.54L25.88 360.95L25.02 360.44L24.12 360.03L23.18 359.72L22.22 359.50L21.26 359.38L20.29 359.37L19.33 359.45L18.39 359.63L17.48 359.90L16.61 360.26L15.79 360.71L15.02 361.23L14.31 361.83L13.68 362.49L13.11 363.20L12.63 363.97L12.23 364.77L11.92 365.61L11.70 366.47L11.57 367.34L11.52 368.21L11.57 369.07L11.70 369.92L11.92 370.75L12.22 371.54L12.60 372.29L13.05 373.00L13.56 373.64L14.13 374.23L14.76 374.76L15.43 375.21L16.14 375.59L16.87 375.89L17.63 376.11L18.40 376.25L19.18 376.31L19.95 376.30L20.71 376.20L21.44 376.03L22.16 375.78L22.83 375.47L23.47 375.09L24.05 374.65L24.59 374.16L25.07 373.62L25.48 373.04L25.83 372.43L26.12 371.79L26.33 371.13L26.47 370.46L26.55 369.78L26.55 369.10L26.49 368.44L26.35 367.79L26.16 367.16L25.90 366.57L25.58 366.00L25.22 365.48L24.80 365.01L24.35 364.58L23.85 364.21L23.33 363.89L22.78 363.63L22.22 363.43L21.64 363.29L21.06 363.22L20.48 363.20L19.91 363.24L19.35 363.34L18.81 363.50L18.30 363.71L17.81 363.97L17.36 364.27L16.95 364.61L16.58 364.99L16.26 365.40L15.98 365.84L15.75 366.29L15.58 366.77L15.45 367.25L15.38 367.73L15.36 368.22L15.38 368.70L15.46 369.16L15.58 369.61L15.75 370.04L15.95 370.44L16.20 370.82L16.47 371.16L16.78 371.47L17.11 371.74L17.47 371.97L17.84 372.16L18.22 372.30L18.61 372.41L19.00 372.47L19.39 372.49L19.77 372.47L20.15 372.41L20.50 372.32L20.84 372.19L21.16 372.03L21.46 371.83L21.73 371.62L21.97 371.38L22.18 371.12L22.36 370.84L22.50 370.55L22.61 370.26L22.69 369.96L22.73 369.66L22.75 369.37L22.73 369.08L22.68 368.80L22.60 368.53L22.50 368.28L22.37 368.05L22.23 367.83L22.06 367.64L21.88 367.47L21.69 367.33L21.49 367.21L21.28 367.12L21.07 367.05L20.86 367.00L20.65 366.99L20.45 366.99L20.25 367.01L20.07 367.06L19.89 367.13L19.73 367.21L19.59 367.30L19.46 367.41L19.35 367.53L19.26 367.65L19.18 367.78L19.13 367.92L19.09 368.05L19.07 368.18L19.07 368.31L19.08 368.43" fill="none" stroke="#8b8b87" stroke-width="2" stroke-linecap="round" stroke-linejoin="round"/>
<ellipse cx="19" cy="414.300" rx="6" ry="1" fill="url(#gshadow)"/>
<g transform="translate(11.8 413.6) scale(0.93) translate(-11.8 -413.6)"><path d="M11.800 413.600L13.300 408.600L25.800 396.300L29.800 400L17.200 412Z" fill="#c08028" stroke="#6b4510" stroke-width="0.800" stroke-linejoin="round"/><path d="M14.300 408.800L26.500 397.200L27.600 398.300L15.400 410Z" fill="#e6b464" opacity="0.900"/><path d="M25.800 396.300L27 395.200L31 398.800L29.800 400Z" fill="#c9ccd0" stroke="#77797d" stroke-width="0.400"/><path d="M27 395.200Q28.800 393.400 30.600 394.700Q32.200 396.300 31 398.800Z" fill="#e8202c" stroke="#a01018" stroke-width="0.400"/><path d="M11.800 413.600L13.300 408.600L17.200 412Z" fill="#ecd2a4" stroke="#6b4510" stroke-width="0.500"/><path d="M11.800 413.600L12.600 411.100L14.100 412.600Z" fill="#2a2018"/></g>
<rect x="12.500" y="433.500" width="7.500" height="7.500" fill="#d4d4d4" stroke="#5a5a5a" stroke-width="1"/><rect x="14" y="435" width="4.500" height="4.500" fill="#bdbdbd"/><path d="M14.500 441V447.500M17.500 441V447.500" stroke="#4a4a4a" stroke-width="1"/>
<path d="M20 434.800Q21 431.800 24 431.800Q26.500 432 26 436.500" fill="none" stroke="#7a7a7a" stroke-width="1.500"/>
<path d="M25.600 435.800Q21.600 440.500 21.300 443Q21.800 445.200 23.500 446.300H28Q29.800 445.200 30.200 443Q29.800 440.500 25.600 435.800Z" fill="#f6dc3c" stroke="#b8960c" stroke-width="0.700"/><path d="M25.600 437.500V443" stroke="#222" stroke-width="0.900"/><circle cx="25.600" cy="443.300" r="0.900" fill="#222"/><rect x="23.200" y="446.300" width="5.200" height="4.200" fill="#2c54b4" stroke="#1c3680" stroke-width="0.500"/><path d="M24.800 447V450M26.900 447V450" stroke="#cfe0ff" stroke-width="0.700"/>
<ellipse cx="17" cy="486.800" rx="7" ry="1.100" fill="url(#gshadow)"/>
<path d="M12.600 483.200L11.500 479.800L13.800 480.300Q16 473.500 22.500 469Q28 465.300 30.800 466.300Q32.500 467.500 31.300 470.500Q29 476 22 480.500L20.800 482.800L19.300 481.800L17.500 484L16.300 482.600Q14.500 483.300 12.600 483.200Z" fill="#f1c3a0" stroke="#b87636" stroke-width="0.800" stroke-linejoin="round"/>
<path d="M13.500 482.500Q21 474.500 30.500 467.300" fill="none" stroke="#fbe6d4" stroke-width="1.200"/><path d="M15 481Q22 476 29.500 470.500" fill="none" stroke="#dc9c6c" stroke-width="0.600"/>
<path d="M9.800 486.800L12.300 481.800L14.600 483.800Z" fill="#111"/>
<ellipse cx="21" cy="523" rx="11" ry="1.5" fill="url(#gshadow)"/>
<text transform="translate(21 522.300) scale(1.070 1)" x="0" y="0" text-anchor="middle" font-family="DejaVu Sans, Liberation Sans, sans-serif" font-weight="bold" font-size="26.800" fill="url(#gA)">A</text>
<path d="M14 552L17.600 541.500H23.500" fill="none" stroke="#3e4446" stroke-width="1.100"/><path d="M28 545.500V552" stroke="#5e6466" stroke-width="2"/>
<rect x="23" y="537.5" width="9" height="8.800" rx="1.200" fill="#ececec" stroke="#a2a2a2" stroke-width="0.900"/><rect x="24" y="538.5" width="7" height="6.800" rx="0.500" fill="none" stroke="#fbfbfb" stroke-width="0.800"/>
<rect x="9.5" y="551.5" width="10.5" height="8.800" rx="1.200" fill="#ececec" stroke="#a2a2a2" stroke-width="0.900"/><rect x="10.5" y="552.5" width="8.5" height="6.800" rx="0.500" fill="none" stroke="#fbfbfb" stroke-width="0.800"/>
<rect x="22.5" y="551.5" width="10" height="8.800" rx="1.200" fill="#ececec" stroke="#a2a2a2" stroke-width="0.900"/><rect x="23.5" y="552.5" width="8" height="6.800" rx="0.500" fill="none" stroke="#fbfbfb" stroke-width="0.800"/>
<ellipse cx="21" cy="594.5" rx="8" ry="1" fill="url(#gshadow)"/>
<rect x="12.5" y="576.5" width="17" height="16.5" fill="url(#ggrad)" stroke="#555" stroke-width="1"/><rect x="13.5" y="577.5" width="15" height="14.500" fill="none" stroke="#eee" stroke-width="0.8"/>
<ellipse cx="19" cy="630" rx="5" ry="3" fill="url(#gshadow)" opacity="0.5"/><path d="M15.300 626L24.300 616.800" stroke="#4e7cc0" stroke-width="2.600" stroke-linecap="round"/><path d="M16 625L23.600 617.200" stroke="#a9c6ee" stroke-width="0.900" stroke-linecap="round"/><path d="M22.800 614.800L27.200 619.200" stroke="#2a3a58" stroke-width="1.500" stroke-linecap="round"/><path d="M24.800 615.800Q25 611.800 28.200 612.200Q30.800 613.600 27 617.800Z" fill="#34609f" stroke="#1c3566" stroke-width="0.700"/><path d="M13 630.500Q12.800 627.800 14.800 626.300Q17 628 16.800 630.500Q15 632.300 13 630.500Z" fill="#2c62c8" stroke="#1c46a0" stroke-width="0.500"/><circle cx="14.900" cy="629.600" r="0.900" fill="#e8f0ff"/>
<path d="M159.3 688Q165 682.3 171.2 688Q165 692.8 159.3 688Z" fill="#fbf6ec" stroke="#c49450" stroke-width="0.9"/><circle cx="165.2" cy="687.8" r="2.4" fill="#3f78d0" stroke="#2a58a8" stroke-width="0.5"/><circle cx="165.2" cy="687.8" r="0.9" fill="#163a78"/>
<path d="M160.5 685.3L159.6 684M162.5 684.2L162 682.8M165.2 683.8V682.4M167.8 684.2L168.4 682.8M169.8 685.3L170.8 684" stroke="#c49450" stroke-width="0.7" fill="none"/>
<path d="M180.3 688V685.2Q180.3 682.6 183 682.6Q185.6 682.6 185.6 685.2V686" fill="none" stroke="#b4b8bc" stroke-width="1.5"/><rect x="179.8" y="687.6" width="8.2" height="6.4" rx="0.5" fill="url(#gyel)" stroke="#b09a10" stroke-width="0.6"/>
</svg>
</body></html>
